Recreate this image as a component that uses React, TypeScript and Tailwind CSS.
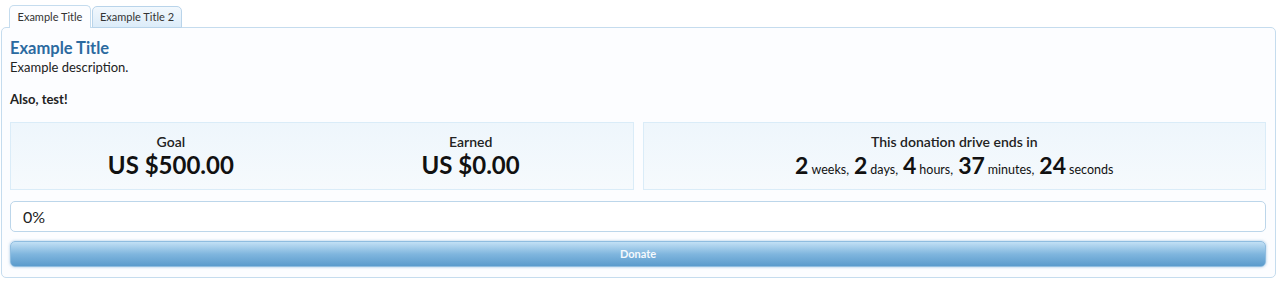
import React from "react";

const sans = "[font-family:'Lato','Open_Sans',sans-serif]";

function Tabs() {
  return (
    <ul className="flex gap-[1px] pl-[8px] relative z-10 -mb-px">
      <li className="w-[82px] h-[23px] flex items-center justify-center rounded-t-[5px] border border-b-0 border-[#c5dcee] bg-[#fcfdff] text-[11px] text-[#333]">
        Example Title
      </li>
      <li className="w-[90px] h-[22px] mt-[1px] flex items-center justify-center rounded-t-[5px] border border-[#b9d4ea] bg-gradient-to-b from-[#f2f8fd] to-[#dcecf9] text-[11px] text-[#333]">
        Example Title 2
      </li>
    </ul>
  );
}

function Stat({ label, value }: { label: string; value: string }) {
  return (
    <div className="flex flex-col items-center">
      <div className="text-[14px] leading-[16px] font-semibold text-[#222]">{label}</div>
      <div className="text-[24px] leading-[30px] font-bold text-[#111]">{value}</div>
    </div>
  );
}

function Countdown() {
  const parts = [
    ["2", "weeks,"],
    ["2", "days,"],
    ["4", "hours,"],
    ["37", "minutes,"],
    ["24", "seconds"],
  ];
  return (
    <div className="flex flex-col items-center">
      <div className="text-[14px] leading-[16px] font-semibold text-[#222]">This donation drive ends in</div>
      <div className="leading-[30px] text-[#111] flex items-baseline gap-[5px]">
        {parts.map(([n, u]) => (
          <span key={u} className="flex items-baseline gap-[3px]">
            <span className="text-[23px] font-bold">{n}</span>
            <span className="text-[12.5px]">{u}</span>
          </span>
        ))}
      </div>
    </div>
  );
}

export default function App() {
  return (
    <div className={`${sans} bg-white pt-[5px] pl-[1px] pr-[4px] pb-[12px]`}>
      <Tabs />
      <div className="border border-[#c5dcee] rounded-[5px] bg-[#fcfdff] pl-[8px] pr-[9px] pt-[9px] pb-[10px]">
        <h3 className="text-[16.5px] leading-[22px] font-bold text-[#2b6aa0]">Example Title</h3>
        <div className="text-[13px] leading-[16px] text-[#222]">
          Example description.
          <br />
          <br />
          <b>Also, test!</b>
        </div>

        <div className="grid grid-cols-2 gap-[9px] mt-[15px]">
          <div className="grid grid-cols-2 h-[68px] pt-[11px] pl-[10px] pr-[12px] border border-[#daecf8] bg-gradient-to-b from-[#eef6fc] to-[#f6fafd]">
            <Stat label="Goal" value="US $500.00" />
            <Stat label="Earned" value="US $0.00" />
          </div>
          <div className="h-[68px] pt-[11px] border border-[#daecf8] bg-gradient-to-b from-[#eef6fc] to-[#f6fafd]">
            <Countdown />
          </div>
        </div>

        <div className="mt-[11px] h-[31px] flex items-center pl-[12px] border border-[#bcd6ea] rounded-[5px] bg-white text-[16px] text-[#222]">
          0%
        </div>

        <button className="mt-[9px] w-full h-[26px] rounded-[5px] border border-[#8fbde0] bg-gradient-to-b from-[#c2e0f5] via-[#80b6de] to-[#5a9bcc] shadow-[0_0_3px_rgba(100,160,210,0.6)] text-[11px] font-bold text-[#f4f9fd]">
          Donate
        </button>
      </div>
    </div>
  );
}
